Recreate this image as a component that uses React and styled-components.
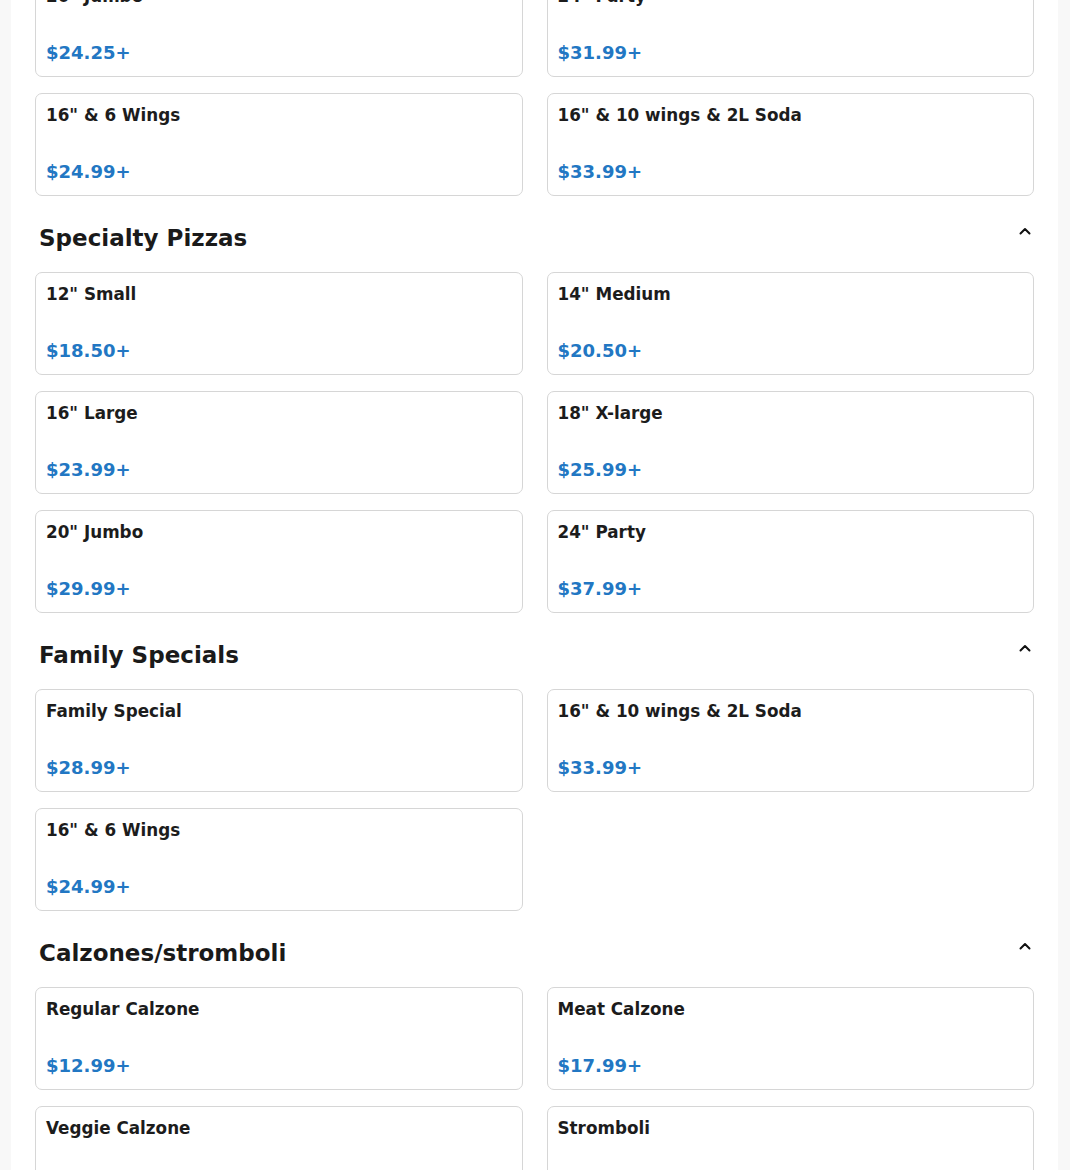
import React from "react";
import styled, { createGlobalStyle } from "styled-components";

const GlobalStyle = createGlobalStyle`
  html, body {
    margin: 0;
    padding: 0;
    background: #f8f8f8;
    font-family: "DejaVu Sans", "Liberation Sans", sans-serif;
    color: #1c1c1c;
  }
`;

const Page = styled.main`
  margin: -26px 12px 0 11px;
  background: #fff;
  padding: 0 24px 40px;
`;

const Section = styled.section`
  display: flex;
  flex-direction: column;
`;

const SectionHeader = styled.div`
  display: flex;
  align-items: center;
  justify-content: space-between;
  padding: 22px 4px 14px;
`;

const SectionTitle = styled.h2`
  margin: 0;
  font-size: 23px;
  font-weight: 700;
  line-height: 40px;
  color: #1a1a1a;
`;

const Toggle = styled.button`
  border: none;
  background: none;
  padding: 0;
  margin-top: -14px;
  margin-right: -1px;
  width: 12px;
  height: 8px;
  display: flex;
  align-items: center;
  justify-content: center;
  color: #111;
`;

const Grid = styled.div`
  display: grid;
  grid-template-columns: 1fr 1fr;
  column-gap: 24px;
  row-gap: 16px;
`;

const Card = styled.div`
  box-sizing: border-box;
  height: 103px;
  border: 1px solid #d6d6d6;
  border-radius: 7px;
  padding: 9px 10px 11px;
  display: flex;
  flex-direction: column;
  justify-content: space-between;
`;

const ItemName = styled.div`
  font-size: 16.8px;
  font-weight: 700;
  line-height: 24px;
  color: #1c1c1c;
`;

const Price = styled.div`
  font-size: 18px;
  font-weight: 700;
  line-height: 24px;
  color: #2277c3;
`;

const Chevron = () => (
  <svg width="12" height="8" viewBox="0 0 12 8" fill="none" stroke="currentColor" strokeWidth="2" strokeLinecap="round" strokeLinejoin="round">
    <path d="M1.5 6.5L6 2l4.5 4.5" />
  </svg>
);

const sections = [
  {
    title: "Pizzas",
    hidden: true,
    items: [
      ["20\" Jumbo", "$24.25+"],
      ["24\" Party", "$31.99+"],
      ["16\" & 6 Wings", "$24.99+"],
      ["16\" & 10 wings & 2L Soda", "$33.99+"],
    ],
  },
  {
    title: "Specialty Pizzas",
    items: [
      ["12\" Small", "$18.50+"],
      ["14\" Medium", "$20.50+"],
      ["16\" Large", "$23.99+"],
      ["18\" X-large", "$25.99+"],
      ["20\" Jumbo", "$29.99+"],
      ["24\" Party", "$37.99+"],
    ],
  },
  {
    title: "Family Specials",
    items: [
      ["Family Special", "$28.99+"],
      ["16\" & 10 wings & 2L Soda", "$33.99+"],
      ["16\" & 6 Wings", "$24.99+"],
    ],
  },
  {
    title: "Calzones/stromboli",
    items: [
      ["Regular Calzone", "$12.99+"],
      ["Meat Calzone", "$17.99+"],
      ["Veggie Calzone", "$12.99+"],
      ["Stromboli", "$14.99+"],
    ],
  },
];

export default function App() {
  return (
    <>
      <GlobalStyle />
      <Page>
        {sections.map((s) => (
          <Section key={s.title}>
            {!s.hidden && (
              <SectionHeader>
                <SectionTitle>{s.title}</SectionTitle>
                <Toggle aria-label="Collapse">
                  <Chevron />
                </Toggle>
              </SectionHeader>
            )}
            <Grid>
              {s.items.map(([name, price], i) => (
                <Card key={i}>
                  <ItemName>{name}</ItemName>
                  <Price>{price}</Price>
                </Card>
              ))}
            </Grid>
          </Section>
        ))}
      </Page>
    </>
  );
}
